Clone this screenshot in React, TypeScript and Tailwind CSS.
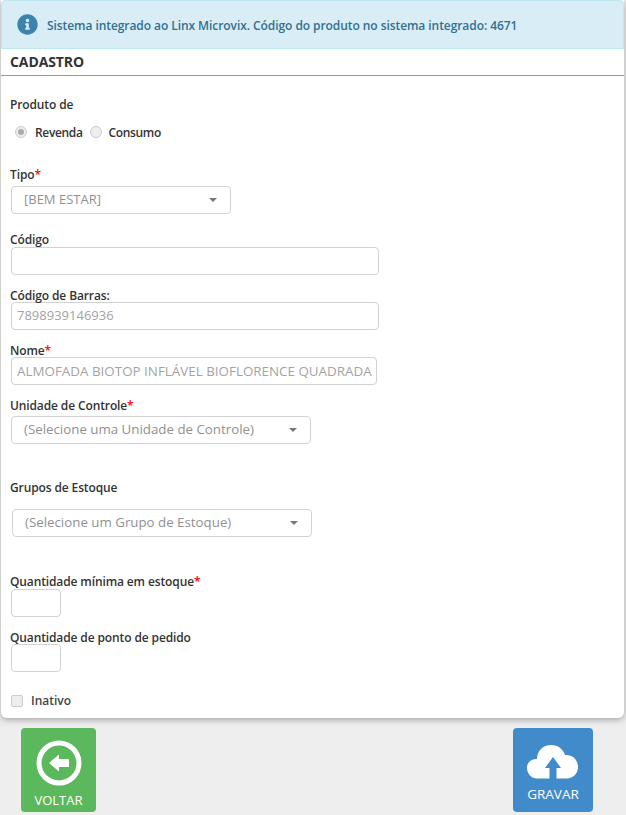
import { FaInfoCircle } from 'react-icons/fa';

const labelClass = 'block text-xs font-semibold leading-[17px] tracking-[-0.12px] text-[#333]';
const inputClass = 'h-7 rounded border border-[#d2d2d2] bg-white';

function Req() {
  return <span className="text-[#f00]">*</span>;
}

function SelectBox({ text, width, className = '' }: { text: string; width: string; className?: string }) {
  return (
    <div className={`${inputClass} ${width} ${className} flex items-center pl-3 pr-[13px] text-[#919191]`}>
      <span className="flex-1 truncate">{text}</span>
      <span className="h-0 w-0 border-x-[4px] border-t-[4px] border-x-transparent border-t-[#777]" />
    </div>
  );
}

function BackIcon() {
  return (
    <svg width="46" height="46" viewBox="0 0 46 46" className="block">
      <circle cx="23" cy="23" r="20" fill="none" stroke="#fff" strokeWidth="5" />
      <path d="M13 23 L23 14.500 V19 H33 V27 H23 V31.500 Z" fill="#fff" />
    </svg>
  );
}

function CloudIcon() {
  return (
    <svg width="52" height="34" viewBox="0 0 52 34" className="block">
      <path
        fill="#fff"
        d="M10 33.500 C4 33.500 0 28.500 0 22.500 C0 17.500 4 14 10 14 C10 6 16 0 24 0 C31 0 36 4 38 10 C46 9.500 51 15 51 22 C51 28.500 46 33.500 40 33.500 H29.500 V23 H34 L26 12 L18 23 H22.500 V33.500 Z"
      />
    </svg>
  );
}

export default function App() {
  return (
    <div className="h-[815px] overflow-hidden bg-[#eee] font-['Open_Sans',sans-serif]">
      <div className="ml-px mr-[2px] h-[718px] rounded-b-md bg-white shadow-[0_2px_6px_rgba(0,0,0,0.3)]">
        <div className="flex h-[49px] items-center rounded-t border border-[#bce8f1] bg-[#d9edf7] pl-[15px] text-xs font-semibold tracking-[-0.07px] text-[#31708f]">
          <FaInfoCircle className="mr-[9px] text-[21px] text-[#3d84ad]" />
          <span className="pt-[2px]">Sistema integrado ao Linx Microvix. Código do produto no sistema integrado: 4671</span>
        </div>
        <div className="flex h-[27px] items-center border-b border-[#999] pl-[9px] text-sm font-bold tracking-[-0.1px] text-[#333]">
          CADASTRO
        </div>

        <div className="pl-[9px]">
          <label className={`${labelClass} mt-[20px]`}>Produto de</label>
          <div className="mt-[12px] flex items-center text-xs font-semibold tracking-[-0.35px] text-[#333]">
            <span className="mb-[3px] ml-[5px] flex h-[12px] w-[12px] items-center justify-center rounded-full border border-[#ccc] bg-[#eee]">
              <span className="h-[6px] w-[6px] rounded-full bg-[#aaa]" />
            </span>
            <span className="ml-[8px]">Revenda</span>
            <span className="mb-[3px] ml-[7px] h-[12px] w-[12px] rounded-full border border-[#ccc] bg-[#eee]" />
            <span className="ml-[7px]">Consumo</span>
          </div>

          <label className={`${labelClass} mt-[25px]`}>
            Tipo<Req />
          </label>
          <SelectBox text="[BEM ESTAR]" width="w-[220px] text-[13px]" className="ml-px mt-[3px]" />

          <label className={`${labelClass} mt-[17px]`}>Código</label>
          <div className={`${inputClass} ml-px -mt-px w-[368px]`} />

          <label className={`${labelClass} mt-[12px]`}>Código de Barras:</label>
          <div className={`${inputClass} ml-px -mt-[2px] flex w-[368px] items-center pl-[5px] text-[13px] text-[#a3a3a3]`}>7898939146936</div>

          <label className={`${labelClass} mt-[12px]`}>
            Nome<Req />
          </label>
          <div className={`${inputClass} ml-px -mt-[2px] flex w-[366px] items-center overflow-hidden whitespace-nowrap pl-[5px] text-[13.4px] text-[#a3a3a3]`}>
            ALMOFADA BIOTOP INFLÁVEL BIOFLORENCE QUADRADA
          </div>

          <label className={`${labelClass} mt-[12px]`}>
            Unidade de Controle<Req />
          </label>
          <SelectBox text="(Selecione uma Unidade de Controle)" width="w-[300px] text-[13.3px]" className="ml-px mt-[2px]" />

          <label className={`${labelClass} mt-[35px]`}>Grupos de Estoque</label>
          <SelectBox text="(Selecione um Grupo de Estoque)" width="w-[300px] text-[13.3px]" className="ml-[2px] mt-[13px]" />

          <label className={`${labelClass} mt-[36px]`}>
            Quantidade mínima em estoque<Req />
          </label>
          <div className={`${inputClass} ml-px -mt-px w-[50px]`} />

          <label className={`${labelClass} mt-[12px]`}>Quantidade de ponto de pedido</label>
          <div className={`${inputClass} ml-px -mt-[2px] w-[50px]`} />

          <div className="mt-[21px] flex items-center text-xs font-semibold text-[#444]">
            <span className="ml-px h-[12px] w-[12px] rounded-[2px] border border-[#ccc] bg-[#eee]" />
            <span className="ml-2">Inativo</span>
          </div>
        </div>
      </div>

      <div className="mt-[10px] flex items-start justify-between pl-[21px] pr-[33px]">
        <button className="flex h-[84px] w-[75px] flex-col items-center rounded bg-[#5cb85c] pt-[12px] text-[13px] text-white">
          <BackIcon />
          <span className="mt-[6px] leading-[17px]">VOLTAR</span>
        </button>
        <button className="flex h-[84px] w-[80px] flex-col items-center rounded bg-[#428bca] pt-[17px] text-[13.5px] text-white">
          <CloudIcon />
          <span className="mt-[7px] leading-[17px]">GRAVAR</span>
        </button>
      </div>
    </div>
  );
}
